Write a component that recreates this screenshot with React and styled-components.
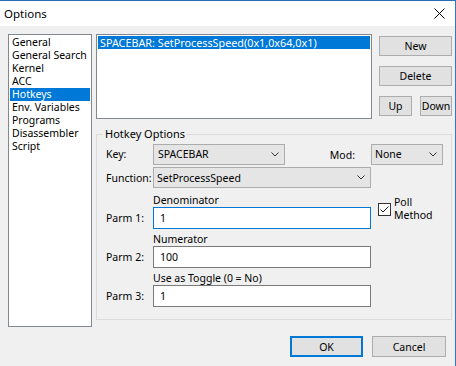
import React from "react";
import styled, { createGlobalStyle } from "styled-components";

const GlobalStyle = createGlobalStyle`
  html, body {
    margin: 0;
    padding: 0;
    background: #f0f0f0;
  }
  body {
    font-family: "Noto Sans", "Open Sans", sans-serif;
    font-size: 10.5px;
    color: #000;
  }
  * { box-sizing: border-box; }
`;

const Window = styled.div`
  width: 456px;
  height: 366px;
  background: #f0f0f0;
  border-top: 1px solid #2a6fb5;
  border-right: 1px solid #2a7bd0;
  display: flex;
  flex-direction: column;
  overflow: hidden;
`;
const TitleBar = styled.div`
  height: 25px;
  background: #fff;
  display: flex;
  align-items: center;
  justify-content: space-between;
  padding: 0 10px 0 4px;
`;
const Title = styled.div`
  font-size: 11.5px;
`;
const CloseBtn = styled.div`
  display: flex;
  align-items: center;
`;
const Main = styled.div`
  display: flex;
  padding: 8px 0 0 8px;
`;
const PageList = styled.div`
  width: 84px;
  height: 293px;
  background: #fff;
  border: 1px solid #828790;
  padding: 1px;
`;
const PageItem = styled.div`
  line-height: 13px;
  height: 13px;
  padding-left: 2px;
  white-space: nowrap;
  background: ${p => (p.$selected ? "#0078d7" : "transparent")};
  color: ${p => (p.$selected ? "#fff" : "#000")};
`;
const RightPane = styled.div`
  margin-left: 4px;
  display: flex;
  flex-direction: column;
`;
const TopRow = styled.div`
  display: flex;
`;
const HotkeyList = styled.div`
  width: 276px;
  height: 85px;
  background: #fff;
  border: 1px solid #828790;
  padding: 1px;
`;
const HotkeyItem = styled.div`
  line-height: 13px;
  height: 13px;
  padding-left: 2px;
  white-space: nowrap;
  font-size: 10.8px;
  background: ${p => (p.$selected ? "#0078d7" : "transparent")};
  color: ${p => (p.$selected ? "#fff" : "#000")};
`;
const ButtonColumn = styled.div`
  margin-left: 7px;
  width: 73px;
  padding-top: 2px;
  display: flex;
  flex-direction: column;
  gap: 10px;
`;
const ButtonPair = styled.div`
  display: flex;
  justify-content: space-between;
`;
const Button = styled.button`
  font: inherit;
  color: #000;
  width: ${p => p.$width || "100%"};
  height: 20px;
  padding: 0;
  background: #e1e1e1;
  border: 1px solid #adadad;
  border-radius: 0;
  white-space: nowrap;
`;
const GroupBox = styled.fieldset`
  margin: 8px 0 0 0;
  padding: 0 0 12px 0;
  width: 356px;
  border: 1px solid #dcdcdc;
  min-width: 0;
`;
const Legend = styled.legend`
  margin-left: 6px;
  padding: 0 2px;
  line-height: 14px;
  font-size: 11px;
`;
const OptionsGrid = styled.div`
  display: grid;
  grid-template-columns: 47px 218px 1fr;
  row-gap: 2px;
  padding: 2px 0 0 9px;
`;
const FieldLabel = styled.div`
  align-self: ${p => (p.$bottom ? "end" : "center")};
  line-height: 22px;
  white-space: nowrap;
`;
const KeyCell = styled.div`
  display: flex;
  align-items: center;
  justify-content: space-between;
  padding-right: 16px;
`;
const Combo = styled.div`
  width: ${p => p.$width};
  height: 21px;
  background: #e5e5e5;
  border: 1px solid #acacac;
  display: flex;
  align-items: center;
  justify-content: space-between;
  padding: 0 5px 0 ${p => p.$pad || "3px"};
  white-space: nowrap;
`;
const ModLabel = styled.div`
  padding-top: 2px;
`;
const ModCell = styled.div`
  display: flex;
  align-items: center;
`;
const ParmField = styled.div`
  margin-top: ${p => (p.$first ? "3px" : "2px")};
  display: flex;
  flex-direction: column;
`;
const Caption = styled.div`
  line-height: 12px;
  height: 13px;
  white-space: nowrap;
`;
const TextBox = styled.div`
  width: 218px;
  height: 22px;
  background: #fff;
  border: 1px solid ${p => (p.$focused ? "#0078d7" : "#7a7a7a")};
  padding-left: 6px;
  display: flex;
  align-items: center;
`;
const CheckArea = styled.div`
  padding: 5px 0 0 7px;
  display: flex;
  align-items: center;
  gap: 3px;
  align-self: start;
`;
const CheckBox = styled.div`
  width: 13px;
  height: 13px;
  background: #fff;
  border: 1px solid #333;
  display: flex;
  align-items: center;
  justify-content: center;
`;
const CheckLabel = styled.div`
  line-height: 13px;
`;
const Footer = styled.div`
  display: flex;
  justify-content: flex-end;
  gap: 9px;
  padding: 9px 9px 0 0;
`;
const DialogButton = styled.button`
  font: inherit;
  color: #000;
  width: ${p => p.$width};
  height: 21px;
  padding: 0;
  background: #e1e1e1;
  border: ${p => (p.$default ? "2px solid #0078d7" : "1px solid #adadad")};
  border-radius: 0;
`;

const Chevron = () => (
  <svg width="8" height="5" viewBox="0 0 8 5">
    <polyline points="0.5,0.5 4,4 7.5,0.5" fill="none" stroke="#333" strokeWidth="1" />
  </svg>
);

const CloseIcon = () => (
  <svg width="11" height="11" viewBox="0 0 11 11">
    <line x1="0.5" y1="0.5" x2="10.5" y2="10.5" stroke="#000" strokeWidth="1" />
    <line x1="10.5" y1="0.5" x2="0.5" y2="10.5" stroke="#000" strokeWidth="1" />
  </svg>
);

const CheckMark = () => (
  <svg width="9" height="7" viewBox="0 0 9 7">
    <polyline points="0.5,3.5 3,6 8.5,0.5" fill="none" stroke="#222" strokeWidth="1" />
  </svg>
);

const pages = [
  "General",
  "General Search",
  "Kernel",
  "ACC",
  "Hotkeys",
  "Env. Variables",
  "Programs",
  "Disassembler",
  "Script",
];

const parms = [
  { label: "Parm 1:", caption: "Denominator", value: "1", focused: true },
  { label: "Parm 2:", caption: "Numerator", value: "100" },
  { label: "Parm 3:", caption: "Use as Toggle (0 = No)", value: "1" },
];

export default function App() {
  return (
    <>
      <GlobalStyle />
      <Window>
        <TitleBar>
          <Title>Options</Title>
          <CloseBtn>
            <CloseIcon />
          </CloseBtn>
        </TitleBar>
        <Main>
          <PageList>
            {pages.map(p => (
              <PageItem key={p} $selected={p === "Hotkeys"}>
                {p}
              </PageItem>
            ))}
          </PageList>
          <RightPane>
            <TopRow>
              <HotkeyList>
                <HotkeyItem $selected>SPACEBAR: SetProcessSpeed(0x1,0x64,0x1)</HotkeyItem>
              </HotkeyList>
              <ButtonColumn>
                <Button>New</Button>
                <Button>Delete</Button>
                <ButtonPair>
                  <Button $width="33px">Up</Button>
                  <Button $width="32px">Down</Button>
                </ButtonPair>
              </ButtonColumn>
            </TopRow>
            <GroupBox>
              <Legend>Hotkey Options</Legend>
              <OptionsGrid>
                <FieldLabel>Key:</FieldLabel>
                <KeyCell>
                  <Combo $width="132px" $pad="4px">
                    SPACEBAR
                    <Chevron />
                  </Combo>
                  <ModLabel>Mod:</ModLabel>
                </KeyCell>
                <ModCell>
                  <Combo $width="72px">
                    None
                    <Chevron />
                  </Combo>
                </ModCell>

                <FieldLabel>Function:</FieldLabel>
                <Combo $width="218px">
                  SetProcessSpeed
                  <Chevron />
                </Combo>
                <div />

                {parms.map((p, i) => (
                  <React.Fragment key={p.label}>
                    <FieldLabel $bottom>{p.label}</FieldLabel>
                    <ParmField $first={i === 0}>
                      <Caption>{p.caption}</Caption>
                      <TextBox $focused={p.focused}>{p.value}</TextBox>
                    </ParmField>
                    {i === 0 ? (
                      <CheckArea>
                        <CheckBox>
                          <CheckMark />
                        </CheckBox>
                        <CheckLabel>
                          Poll
                          <br />
                          Method
                        </CheckLabel>
                      </CheckArea>
                    ) : (
                      <div />
                    )}
                  </React.Fragment>
                ))}
              </OptionsGrid>
            </GroupBox>
          </RightPane>
        </Main>
        <Footer>
          <DialogButton $default $width="73px">OK</DialogButton>
          <DialogButton $width="74px">Cancel</DialogButton>
        </Footer>
      </Window>
    </>
  );
}
